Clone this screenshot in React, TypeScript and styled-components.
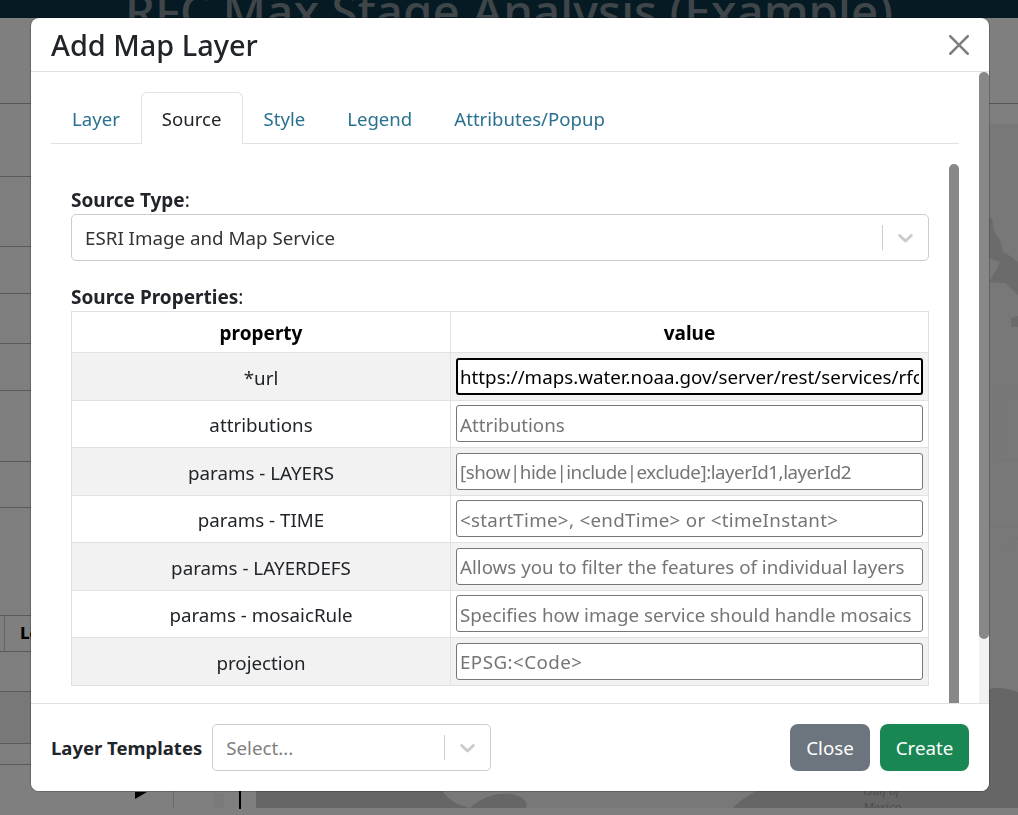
import React from "react";
import styled, { createGlobalStyle } from "styled-components";

const GlobalStyle = createGlobalStyle`
    html, body {
        margin: 0;
        padding: 0;
        height: 100%;
        overflow: hidden;
    }
    body {
        font-family: "Noto Sans", "Open Sans", sans-serif;
        font-size: 18.75px;
        color: #212529;
        background: #ffffff;
    }
    * {
        box-sizing: border-box;
    }
`;

const Page = styled.div`
    height: 815px;
    display: flex;
    flex-direction: column;
`;

const AppBar = styled.header`
    height: 18px;
    flex: none;
    background: #0c3548;
    overflow: hidden;
    display: flex;
    justify-content: center;
`;

const AppTitle = styled.h1`
    margin: -19px 0 0;
    font-size: 47.5px;
    line-height: 60px;
    font-weight: 500;
    color: #7f8c92;
    white-space: nowrap;
`;

const SubBar = styled.div`
    height: 86px;
    flex: none;
    border-bottom: 1px solid #b0b0b0;
`;

const Workspace = styled.div`
    flex: 1;
    display: flex;
    min-height: 0;
    margin-bottom: 7px;
`;

const SidePanel = styled.aside`
    width: 256px;
    flex: none;
    display: flex;
    flex-direction: column;
`;

const SideRow = styled.div<{ $h: number; $tint?: boolean }>`
    height: ${(p) => p.$h}px;
    flex: none;
    border-bottom: 1px solid #b4b4b4;
    background: ${(p) => (p.$tint ? "#f0f0f0" : "transparent")};
    display: flex;
    align-items: center;
`;

const SideCell = styled.div`
    height: 100%;
    width: 5px;
    border-right: 1px solid #c8c8c8;
`;

const SideHeading = styled.b`
    font-size: 15px;
    color: #000;
    margin-left: 15px;
    font-family: "DejaVu Sans", sans-serif;
`;

const PlayerRow = styled.div`
    flex: 1;
    display: flex;
`;

const PlayMark = styled.div`
    width: 174px;
    border-right: 1px solid #d8d8d8;
    display: flex;
    justify-content: flex-end;
    padding: 27px 26px 0 0;
    svg {
        display: block;
    }
`;

const SliderKnob = styled.div`
    width: 10px;
    height: 16px;
    margin: 28px 0 0 40px;
    border-radius: 0 0 5px 5px;
    background: #f4f4f4;
`;

const SliderLine = styled.div`
    width: 2px;
    margin-left: 15px;
    background: #000;
`;

const MapColumn = styled.main`
    flex: 1;
    min-width: 0;
    display: flex;
    flex-direction: column;
`;

const MapStrip = styled.div`
    height: 20px;
    flex: none;
    background: #ffffff;
`;

const MapView = styled.div`
    flex: 1;
    min-height: 0;
    background: #f0f0f0;
    svg {
        display: block;
        width: 100%;
        height: 100%;
    }
`;

const Backdrop = styled.div`
    position: fixed;
    inset: 0;
    background: rgba(0, 0, 0, 0.5);
    padding: 18px 0 0 31px;
`;

const Modal = styled.div`
    width: 958px;
    height: 773px;
    background: #fff;
    border-radius: 8px;
    box-shadow: 0 0 0 1px rgba(0, 0, 0, 0.2);
    display: flex;
    flex-direction: column;
    overflow: hidden;
`;

const ModalHeader = styled.div`
    height: 54px;
    flex: none;
    padding: 0 20px;
    border-bottom: 1px solid #dee2e6;
    display: flex;
    align-items: center;
    justify-content: space-between;
`;

const ModalTitle = styled.h4`
    margin: 0;
    padding-top: 2px;
    font-size: 28.9px;
    font-weight: 500;
    line-height: 1.2;
`;

const CloseX = styled.button`
    border: 0;
    background: none;
    padding: 0;
    width: 20px;
    height: 20px;
    opacity: 0.5;
    cursor: pointer;
    svg {
        display: block;
    }
`;

const ModalMain = styled.div`
    flex: 1;
    min-height: 0;
    display: flex;
    overflow: hidden;
`;

const ModalBody = styled.div`
    flex: 1;
    min-width: 0;
    padding: 20px;
`;

const Rail = styled.div<{ $bg: string }>`
    width: 10px;
    flex: none;
    background: ${(p) => p.$bg};
`;

const Thumb = styled.div<{ $h: number }>`
    height: ${(p) => p.$h}px;
    background: #888;
    border-radius: 5px;
`;

const TabList = styled.nav`
    height: 52px;
    display: flex;
    border-bottom: 1px solid #dee2e6;
`;

const Tab = styled.a<{ $active?: boolean }>`
    height: 52px;
    padding: 0 20px;
    font-size: 18.6px;
    display: flex;
    align-items: center;
    border: 1px solid ${(p) => (p.$active ? "#dee2e6" : "transparent")};
    border-bottom-color: ${(p) => (p.$active ? "#fff" : "transparent")};
    border-radius: 6px 6px 0 0;
    color: ${(p) => (p.$active ? "#212529" : "#2a7190")};
    background: ${(p) => (p.$active ? "#fff" : "transparent")};
    cursor: pointer;
`;

const PanelRow = styled.div`
    height: 590px;
    margin-top: 20px;
    display: flex;
`;

const TabPanel = styled.div`
    flex: 1;
    min-width: 0;
    padding: 23px 20px 0;
`;

const FieldLabel = styled.div`
    line-height: 26px;
    height: 27px;
    font-size: 19px;
    b {
        font-weight: 700;
    }
`;

const SelectBox = styled.div<{ $width?: number }>`
    width: ${(p) => (p.$width ? `${p.$width}px` : "100%")};
    height: 47px;
    flex: none;
    background: #fff;
    border: 1px solid #ccc;
    border-radius: 5px;
    display: flex;
    align-items: center;
    padding-left: 13px;
`;

const SelectValue = styled.span<{ $placeholder?: boolean }>`
    flex: 1;
    color: ${(p) => (p.$placeholder ? "#808080" : "#333")};
`;

const SelectDivider = styled.span`
    width: 1px;
    height: 25px;
    background: #ccc;
`;

const SelectArrow = styled.span`
    width: 45px;
    display: flex;
    justify-content: center;
    color: #ccc;
    svg {
        display: block;
    }
`;

const PropsLabel = styled(FieldLabel)`
    margin-top: 23px;
`;

const PropsTable = styled.table`
    width: 100%;
    table-layout: fixed;
    border-collapse: collapse;
    th, td {
        border: 1px solid #dee2e6;
        text-align: center;
        vertical-align: middle;
        padding-top: 3px;
    }
    th {
        height: 41px;
        color: #000;
        font-size: 19px;
        font-weight: 700;
        padding-top: 2px;
        padding-bottom: 0;
    }
    col:first-child {
        width: 379px;
    }
`;

const PropRow = styled.tr<{ $striped: boolean }>`
    height: 47.5px;
    background: ${(p) => (p.$striped ? "#f2f2f2" : "#fff")};
    color: #212529;
`;

const ValueCell = styled.td`
    && {
        padding: 0 5px;
    }
`;

const ValueInput = styled.input<{ $focused?: boolean; $spacing?: number }>`
    display: block;
    width: 100%;
    height: 37px;
    padding: 1px ${(p) => (p.$focused ? "2px" : "3px")} 0;
    font: inherit;
    letter-spacing: ${(p) => p.$spacing ?? 0}px;
    color: #000;
    background: #fff;
    border: ${(p) => (p.$focused ? "2px solid #000" : "1px solid #767676")};
    border-radius: 3px;
    outline: none;
    &::placeholder {
        color: #757575;
        opacity: 1;
    }
`;

const ModalFooter = styled.div`
    height: 88px;
    flex: none;
    border-top: 1px solid #dee2e6;
    background: #fff;
    padding: 0 20px;
    display: flex;
    align-items: center;
    gap: 10px;
`;

const TemplateLabel = styled.b`
    font-size: 18.5px;
    font-weight: 700;
`;

const FooterSpacer = styled.div`
    flex: 1;
`;

const Button = styled.button<{ $tone: string; $width: number }>`
    width: ${(p) => p.$width}px;
    height: 47px;
    border: 0;
    border-radius: 8px;
    font: inherit;
    color: #fff;
    background: ${(p) => p.$tone};
    cursor: pointer;
`;

const Chevron = () => (
    <svg width="25" height="25" viewBox="0 0 20 20" fill="currentColor">
        <path d="M4.516 7.548c0.436-0.446 1.043-0.481 1.576 0l3.908 3.747 3.908-3.747c0.533-0.481 1.141-0.446 1.576 0 0.436 0.445 0.408 1.197 0 1.615-0.406 0.418-4.695 4.502-4.695 4.502-0.217 0.223-0.502 0.335-0.789 0.335s-0.572-0.112-0.791-0.335c0 0-4.287-4.084-4.695-4.502s-0.436-1.17 0-1.615z" />
    </svg>
);

const tabs = ["Layer", "Source", "Style", "Legend", "Attributes/Popup"];

const properties = [
    { name: "*url", value: "https://maps.water.noaa.gov/server/rest/services/rfc/rfc_max_forecast/MapServer" },
    { name: "attributions", placeholder: "Attributions" },
    { name: "params - LAYERS", placeholder: "[show|hide|include|exclude]:layerId1,layerId2", spacing: -0.49 },
    { name: "params - TIME", placeholder: "<startTime>, <endTime> or <timeInstant>", spacing: 0.3 },
    { name: "params - LAYERDEFS", placeholder: "Allows you to filter the features of individual layers" },
    { name: "params - mosaicRule", placeholder: "Specifies how image service should handle mosaics" },
    { name: "projection", placeholder: "EPSG:<Code>", spacing: 0.45 },
];

const sideRows = [73, 70, 47, 50, 47, 71, 46, 108];

function App() {
    return (
        <>
            <GlobalStyle />
            <Page>
                <AppBar>
                    <AppTitle>RFC Max Stage Analysis (Example)</AppTitle>
                </AppBar>
                <SubBar />
                <Workspace>
                    <SidePanel>
                        {sideRows.map((h, i) => (
                            <SideRow key={i} $h={h} />
                        ))}
                        <SideRow $h={36}>
                            <SideCell />
                            <SideHeading>Legend</SideHeading>
                        </SideRow>
                        <SideRow $h={40} />
                        <SideRow $h={52} $tint />
                        <SideRow $h={21} />
                        <PlayerRow>
                            <PlayMark>
                                <svg width="12" height="8" viewBox="0 0 12 8">
                                    <path d="M0 0H12L0 7Z" fill="#000" />
                                </svg>
                            </PlayMark>
                            <SliderKnob />
                            <SliderLine />
                        </PlayerRow>
                    </SidePanel>
                    <MapColumn>
                        <MapStrip />
                        <MapView>
                            <svg viewBox="0 0 762 684" preserveAspectRatio="none">
                                <path d="M0 684V664H184C190 672 196 680 214 684Z" fill="#cdcdcd" />
                                <path d="M214 684C222 676 236 668 254 670C268 672 272 678 270 684Z" fill="#cdcdcd" />
                                <path d="M477 684C490 668 530 650 590 640C640 624 690 590 725 570C735 561 750 564 762 568V684Z" fill="#cdcdcd" />
                                <path d="M733 94L736 94L738 108L744 116L747 128L754 132L762 138V171L749 159L733 158L740 146L744 138L733 134Z" fill="#d6d6d6" />
                                <path d="M755 194L762 192V203L755 203Z" fill="#d6d6d6" />
                                <path d="M733 268H762M744 268V336H762M733 403H762M750 423L762 414" fill="none" stroke="#e8e8e8" />
                                <text x="607" y="671" fontSize="13" fontStyle="italic" fill="#9a9a9a" fontFamily="Liberation Serif, serif">Gulf of</text>
                                <text x="607" y="687" fontSize="13" fontStyle="italic" fill="#9a9a9a" fontFamily="Liberation Serif, serif">Mexico</text>
                            </svg>
                        </MapView>
                    </MapColumn>
                </Workspace>
            </Page>
            <Backdrop>
                <Modal>
                    <ModalHeader>
                        <ModalTitle>Add Map Layer</ModalTitle>
                        <CloseX aria-label="Close">
                            <svg width="20" height="20" viewBox="0 0 16 16" fill="#000">
                                <path d="M.293.293a1 1 0 0 1 1.414 0L8 6.586 14.293.293a1 1 0 1 1 1.414 1.414L9.414 8l6.293 6.293a1 1 0 0 1-1.414 1.414L8 9.414l-6.293 6.293a1 1 0 0 1-1.414-1.414L6.586 8 .293 1.707a1 1 0 0 1 0-1.414z" />
                            </svg>
                        </CloseX>
                    </ModalHeader>
                    <ModalMain>
                        <ModalBody>
                            <TabList>
                                {tabs.map((t) => (
                                    <Tab key={t} $active={t === "Source"}>
                                        {t}
                                    </Tab>
                                ))}
                            </TabList>
                            <PanelRow>
                                <TabPanel>
                                    <FieldLabel>
                                        <b>Source Type</b>:
                                    </FieldLabel>
                                    <SelectBox>
                                        <SelectValue>ESRI Image and Map Service</SelectValue>
                                        <SelectDivider />
                                        <SelectArrow>
                                            <Chevron />
                                        </SelectArrow>
                                    </SelectBox>
                                    <PropsLabel>
                                        <b>Source Properties</b>:
                                    </PropsLabel>
                                    <PropsTable>
                                        <colgroup>
                                            <col />
                                            <col />
                                        </colgroup>
                                        <thead>
                                            <tr>
                                                <th>property</th>
                                                <th>value</th>
                                            </tr>
                                        </thead>
                                        <tbody>
                                            {properties.map((p, i) => (
                                                <PropRow key={p.name} $striped={i % 2 === 0}>
                                                    <td>{p.name}</td>
                                                    <ValueCell>
                                                        <ValueInput
                                                            $focused={!!p.value}
                                                            $spacing={p.spacing}
                                                            defaultValue={p.value}
                                                            placeholder={p.placeholder}
                                                        />
                                                    </ValueCell>
                                                </PropRow>
                                            ))}
                                        </tbody>
                                    </PropsTable>
                                </TabPanel>
                                <Rail $bg="#fff">
                                    <Thumb $h={590} />
                                </Rail>
                            </PanelRow>
                        </ModalBody>
                        <Rail $bg="#f1f1f1">
                            <Thumb $h={567} />
                        </Rail>
                    </ModalMain>
                    <ModalFooter>
                        <TemplateLabel>Layer Templates</TemplateLabel>
                        <SelectBox $width={279}>
                            <SelectValue $placeholder>Select...</SelectValue>
                            <SelectDivider />
                            <SelectArrow>
                                <Chevron />
                            </SelectArrow>
                        </SelectBox>
                        <FooterSpacer />
                        <Button $tone="#6c757d" $width={80}>Close</Button>
                        <Button $tone="#198754" $width={89}>Create</Button>
                    </ModalFooter>
                </Modal>
            </Backdrop>
        </>
    );
}

export default App;
